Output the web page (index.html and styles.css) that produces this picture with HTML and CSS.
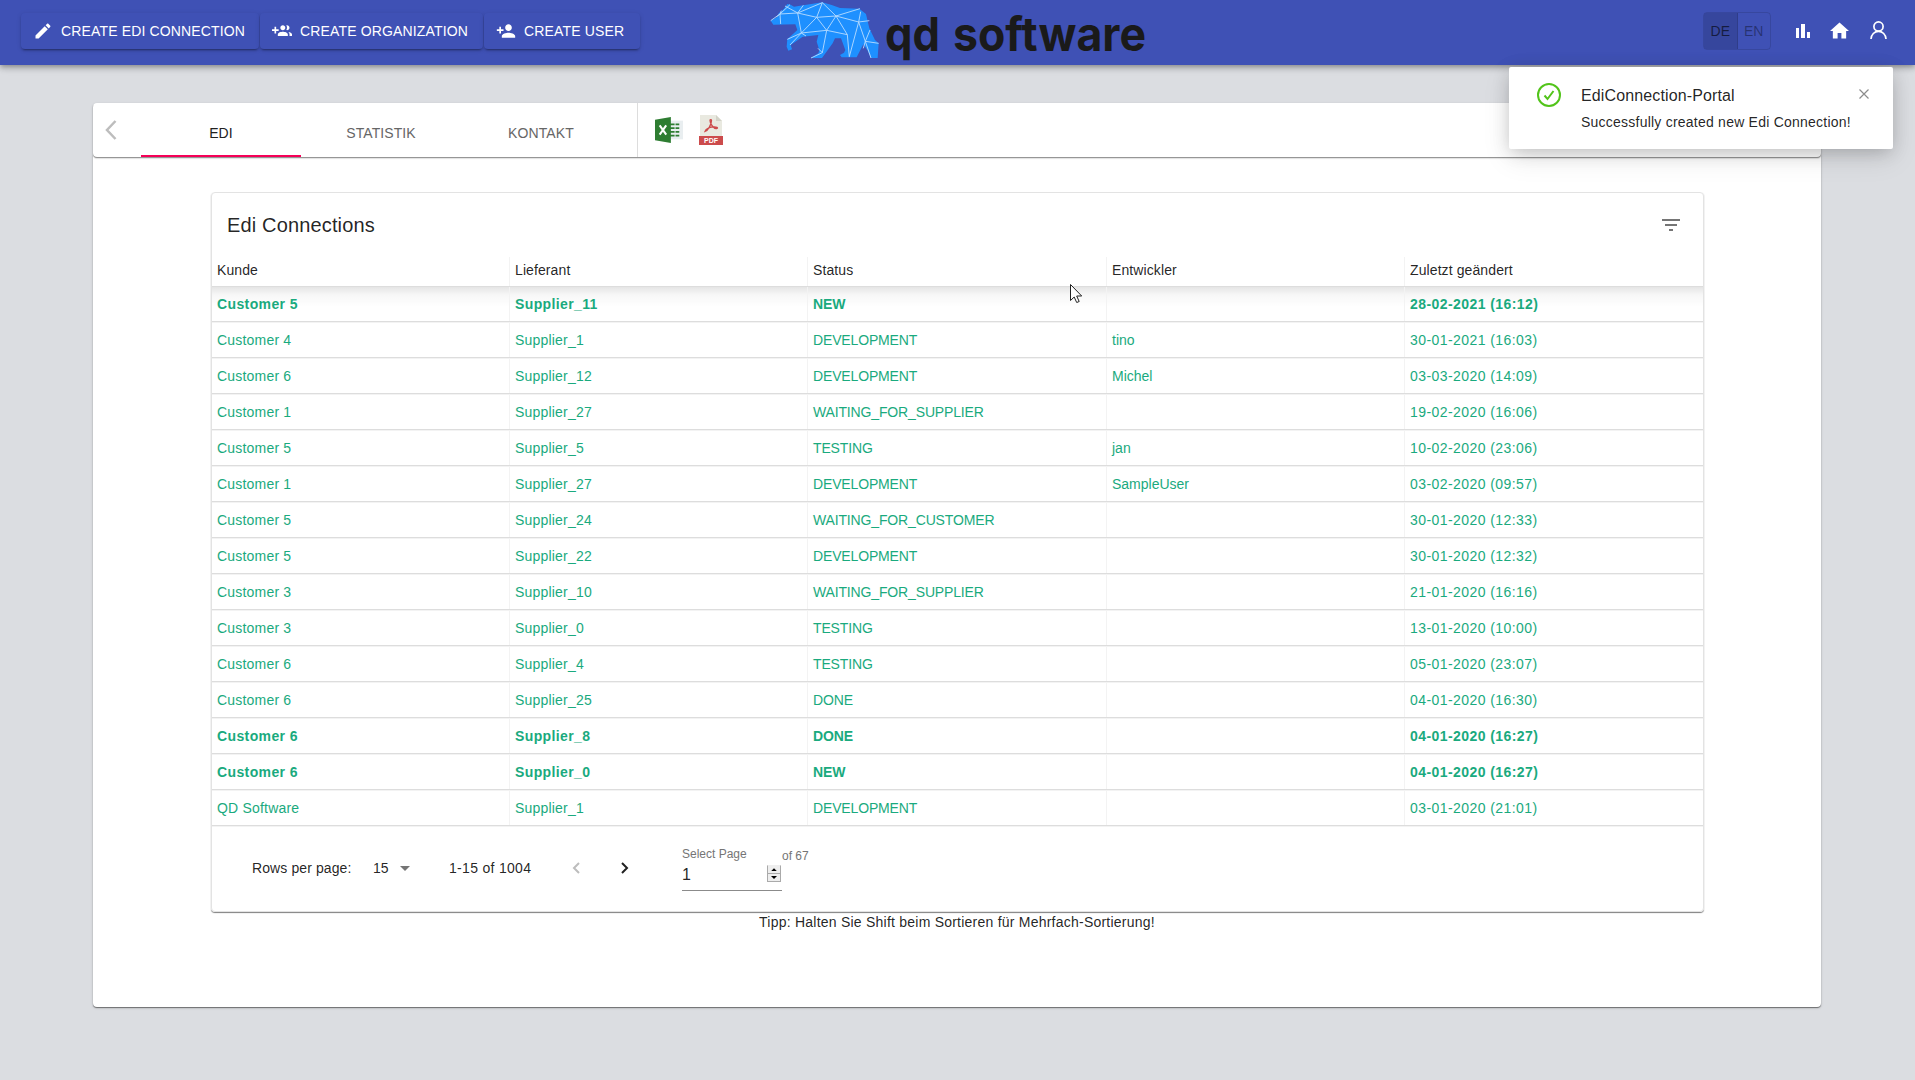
FILE: index.html
```html
<!DOCTYPE html>
<html lang="de">
<head>
<meta charset="utf-8">
<title>EdiConnection-Portal</title>
<link rel="stylesheet" href="styles.css">
</head>
<body>
<header class="appbar">
  <nav class="actions">
    <button class="btn btn-edi"><svg class="ic" viewBox="0 0 24 24"><path d="M3 17.25V21h3.75L17.81 9.94l-3.75-3.75L3 17.25zM20.71 7.04c.39-.39.39-1.02 0-1.41l-2.34-2.34c-.39-.39-1.02-.39-1.41 0l-1.83 1.83 3.75 3.75 1.83-1.83z"/></svg><span>CREATE EDI CONNECTION</span></button>
    <button class="btn btn-org"><svg class="ic" viewBox="0 0 24 24"><path d="M8 10H5V7H3v3H0v2h3v3h2v-3h3v-2zm10 1c1.66 0 2.99-1.34 2.99-3S19.66 5 18 5c-.32 0-.63.05-.91.14.57.81.9 1.79.9 2.86s-.34 2.04-.9 2.86c.28.09.59.14.91.14zm-5 0c1.66 0 2.99-1.34 2.99-3S14.66 5 13 5c-1.66 0-3 1.34-3 3s1.34 3 3 3zm6.62 2.16c.83.73 1.38 1.66 1.38 2.84v2h3v-2c0-1.54-2.37-2.49-4.38-2.84zM13 13c-2 0-6 1-6 3v2h12v-2c0-2-4-3-6-3z"/></svg><span>CREATE ORGANIZATION</span></button>
    <button class="btn btn-user"><svg class="ic" viewBox="0 0 24 24"><path d="M15 12c2.21 0 4-1.79 4-4s-1.79-4-4-4-4 1.79-4 4 1.79 4 4 4zm-9-2V7H4v3H1v2h3v3h2v-3h3v-2H6zm9 4c-2.67 0-8 1.34-8 4v2h16v-2c0-2.66-5.33-4-8-4z"/></svg><span>CREATE USER</span></button>
  </nav>
  <svg class="logo" viewBox="0 0 390 64">
    <g transform="translate(-10 0) scale(.3333)">
      <path class="bear" d="M32 62 53 50 56 40 72 26 82 12 92 14 102 20 130 16 187 7 215 15 240 24 298 26 318 42 328 85 345 120 356 130 353 174H333L322 150 310 133 290 172H245L240 165 252 158 256 150 243 115H225L218 130 186 174H153L175 160 178 150 170 125 175 105 128 110 92 135 96 148 85 152 80 140 82 118 112 90 106 73 40 74Z"/>
      <path class="mesh" d="M32 62 60 42 62 72M50 50 60 42 64 32M60 42 113 39 75 18M130 16 113 39 187 8M60 42 90 14M113 39 170 52 187 8 228 48 170 52 124 99 113 39M170 52 200 91 228 48 300 26M228 48 296 66 302 35M296 66 328 62M296 66 316 124 330 90M228 48 262 104 200 91 124 99 82 118M124 99 138 108M124 99 90 135M200 91 187 158 174 145M187 158 153 174M296 66 268 170M262 104 268 170M316 124 356 130M316 124 310 145M316 124 333 174"/>
    </g>
    <text class="wordmark" y="51"><tspan x="115" textLength="55" lengthAdjust="spacingAndGlyphs">qd</tspan><tspan x="183" textLength="193" lengthAdjust="spacingAndGlyphs">software</tspan></text>
  </svg>
  <div class="tools">
    <div class="lang"><span class="on">DE</span><span>EN</span></div>
    <svg class="ti chart" viewBox="0 0 14 14"><path d="M0 4h3v10H0zM5 0h4v14H5zM11 8h3v6h-3z"/></svg>
    <svg class="ti home" viewBox="2 3 20 17"><path d="M10 20v-6h4v6h5v-8h3L12 3 2 12h3v8z"/></svg>
    <svg class="ti person" viewBox="0 0 17 18"><circle cx="8.500" cy="5.500" r="4.600"/><path d="M1 18c.2-4.500 3.500-7.600 7.500-7.600s7.300 3.100 7.500 7.600"/></svg>
  </div>
</header>

<main class="panel">
  <div class="tabbar">
    <svg class="back" viewBox="0 0 12 20"><path d="M10.500 1 2 10l8.500 9"/></svg>
    <div class="tab active">EDI</div>
    <div class="tab">STATISTIK</div>
    <div class="tab">KONTAKT</div>
    <div class="exports">
      <svg class="xls" viewBox="0 0 30 28"><path fill="#e9eef0" d="M15 4h15v20H15z"/><path fill="#2e7d32" d="M0 3 17 0v28L0 25zM17 7h4v2h-4zm5 0h4v2h-4zm-5 4h4v2h-4zm5 0h4v2h-4zm-5 4h4v2h-4zm5 0h4v2h-4zm-5 4h4v2h-4zm5 0h4v2h-4z"/><path stroke="#fff" stroke-width="2.200" d="m5 9 7 10M12 9 5 19"/></svg>
      <svg class="pdf" viewBox="0 0 24 30"><path fill="#e9e9e0" d="M1 0h16l6 6v15H1z"/><path fill="#d3d3c8" d="m17 0 6 6h-6z"/><path fill="none" stroke="#cc4b4c" stroke-width="1.300" d="M6 16.500c3-1 6.500-7 6.500-11 0-1-1.500-1-1.500 0 0 3.500 4 8.500 6.500 8s0-2-3.500-1.600-7 2-8 4.600z"/><path fill="#cc4b4c" d="M0 21h24v9H0z"/><text x="12" y="28.200">PDF</text></svg>
    </div>
  </div>

  <section class="card">
    <div class="card-head"><h1>Edi Connections</h1><svg class="filter" viewBox="0 0 18 12"><path d="M7 12h4v-2H7v2zM0 0v2h18V0H0zm3 7h12V5H3v2z"/></svg></div>
    <div class="grid head"><span>Kunde</span><span>Lieferant</span><span>Status</span><span>Entwickler</span><span>Zuletzt geändert</span></div>
    <div class="rows">
      <div class="grid row bold"><span>Customer 5</span><span>Supplier_11</span><span>NEW</span><span></span><span>28-02-2021 (16:12)</span></div>
      <div class="grid row"><span>Customer 4</span><span>Supplier_1</span><span>DEVELOPMENT</span><span>tino</span><span>30-01-2021 (16:03)</span></div>
      <div class="grid row"><span>Customer 6</span><span>Supplier_12</span><span>DEVELOPMENT</span><span>Michel</span><span>03-03-2020 (14:09)</span></div>
      <div class="grid row"><span>Customer 1</span><span>Supplier_27</span><span>WAITING_FOR_SUPPLIER</span><span></span><span>19-02-2020 (16:06)</span></div>
      <div class="grid row"><span>Customer 5</span><span>Supplier_5</span><span>TESTING</span><span>jan</span><span>10-02-2020 (23:06)</span></div>
      <div class="grid row"><span>Customer 1</span><span>Supplier_27</span><span>DEVELOPMENT</span><span>SampleUser</span><span>03-02-2020 (09:57)</span></div>
      <div class="grid row"><span>Customer 5</span><span>Supplier_24</span><span>WAITING_FOR_CUSTOMER</span><span></span><span>30-01-2020 (12:33)</span></div>
      <div class="grid row"><span>Customer 5</span><span>Supplier_22</span><span>DEVELOPMENT</span><span></span><span>30-01-2020 (12:32)</span></div>
      <div class="grid row"><span>Customer 3</span><span>Supplier_10</span><span>WAITING_FOR_SUPPLIER</span><span></span><span>21-01-2020 (16:16)</span></div>
      <div class="grid row"><span>Customer 3</span><span>Supplier_0</span><span>TESTING</span><span></span><span>13-01-2020 (10:00)</span></div>
      <div class="grid row"><span>Customer 6</span><span>Supplier_4</span><span>TESTING</span><span></span><span>05-01-2020 (23:07)</span></div>
      <div class="grid row"><span>Customer 6</span><span>Supplier_25</span><span>DONE</span><span></span><span>04-01-2020 (16:30)</span></div>
      <div class="grid row bold"><span>Customer 6</span><span>Supplier_8</span><span>DONE</span><span></span><span>04-01-2020 (16:27)</span></div>
      <div class="grid row bold"><span>Customer 6</span><span>Supplier_0</span><span>NEW</span><span></span><span>04-01-2020 (16:27)</span></div>
      <div class="grid row"><span>QD Software</span><span>Supplier_1</span><span>DEVELOPMENT</span><span></span><span>03-01-2020 (21:01)</span></div>
    </div>
    <div class="pager">
      <span class="rpp">Rows per page:</span>
      <span class="size">15</span><i class="caret"></i>
      <span class="range">1-15 of 1004</span>
      <svg class="chev off" viewBox="0 0 8 12"><path d="M7 1 2 6l5 5"/></svg>
      <svg class="chev next" viewBox="0 0 8 12"><path d="m1 1 5 5-5 5"/></svg>
      <div class="pick"><label>Select Page</label><div class="field"><span>1</span><span class="spin"><i class="up"></i><i class="down"></i></span></div></div>
      <span class="total">of 67</span>
    </div>
  </section>
  <p class="tip">Tipp: Halten Sie Shift beim Sortieren für Mehrfach-Sortierung!</p>
</main>

<aside class="toast">
  <svg class="ok" viewBox="0 0 24 24"><circle cx="12" cy="12" r="11"/><path d="m7.500 12.500 3 3.500 6-8"/></svg>
  <div class="toast-text"><strong>EdiConnection-Portal</strong><span>Successfully created new Edi Connection!</span></div>
  <svg class="close" viewBox="0 0 10 10"><path d="m.5.500 9 9M9.500.500l-9 9"/></svg>
</aside>
<svg class="cursor" viewBox="0 0 12 19"><path d="M.5.500v16l3.700-3.500 2.500 5.500 2.500-1-2.500-5.500h5z"/></svg>
</body>
</html>
```
FILE: styles.css
```css
* { box-sizing: border-box; }
body { margin: 0; height: 1080px; overflow: hidden; background: #dbdde1; color: rgba(0,0,0,.87); font: 14px/20px "Liberation Sans", Arial, sans-serif; }
svg { display: block; flex: none; }
.appbar { position: relative; height: 65px; background: #3f51b5; display: grid; grid-template-columns: 770px 390px 1fr; box-shadow: 0 2px 4px -1px rgba(0,0,0,.2), 0 4px 5px rgba(0,0,0,.14), 0 1px 10px rgba(0,0,0,.12); }
.actions { display: flex; gap: 1px; padding: 13px 0 0 21px; }
.btn { display: flex; align-items: center; gap: 8px; height: 36px; padding: 0 0 0 12px; border: 0; border-radius: 4px; background: #3f51b5; color: #fff; font: inherit; white-space: nowrap; letter-spacing: .15px; box-shadow: 0 3px 1px -2px rgba(0,0,0,.2), 0 2px 2px rgba(0,0,0,.14), 0 1px 5px rgba(0,0,0,.12); }
.btn-edi { width: 238px; }
.btn-org { width: 223px; }
.btn-user { width: 156px; }
.ic { width: 20px; height: 20px; fill: #fff; }
.logo { width: 390px; height: 64px; }
.bear { fill: #1e90ff; }
.mesh { fill: none; stroke: #b9dcff; stroke-width: 2.700; }
.wordmark { font: 700 47px Inter, sans-serif; fill: #1a1a1a; }
.tools { display: flex; justify-content: flex-end; padding-right: 28px; }
.lang { display: flex; width: 68px; height: 38px; margin: 12px 25px 0 0; border: 1px solid rgba(0,0,0,.12); border-radius: 4px; overflow: hidden; color: rgba(0,0,0,.38); line-height: 36px; text-align: center; }
.lang span { flex: 1; }
.lang .on { background: rgba(0,0,0,.13); border-right: 1px solid rgba(0,0,0,.12); color: rgba(0,0,0,.6); }
.ti { fill: #fff; }
.chart { width: 14px; height: 14px; margin: 24px 20px 0 0; }
.home { width: 19px; height: 17px; margin: 22px 21px 0 0; }
.person { width: 17px; height: 18px; margin-top: 21px; fill: none; stroke: #fff; stroke-width: 1.700; }
.panel { width: 1728px; height: 904px; margin: 38px 0 0 93px; background: #fff; border-radius: 4px; box-shadow: 0 1px 1px rgba(0,0,0,.45), 0 1px 3px rgba(0,0,0,.15); }
.tabbar { display: flex; height: 54px; border-radius: 4px; box-shadow: 0 1px 0 #969696, 0 2px 1px rgba(0,0,0,.12); }
.back { width: 12px; height: 20px; margin: 17px 24px 0 12px; fill: none; stroke: #bdbdbd; stroke-width: 2.500; }
.tab { width: 160px; padding-top: 20px; text-align: center; color: #666; letter-spacing: .1px; }
.active { color: #212121; border-bottom: 2px solid #f50057; }
.exports { display: flex; gap: 16px; margin-left: 16px; padding: 13px 0 0 17px; border-left: 1px solid #ddd; }
.xls { width: 28px; height: 28px; fill: none; }
.pdf { width: 24px; height: 30px; margin-top: -1px; }
.pdf text { font: bold 7px "Liberation Sans", sans-serif; fill: #fff; text-anchor: middle; }
.card { width: 1493px; height: 720px; margin: 35px 0 0 118px; border: 1px solid #e3e3e3; border-radius: 4px; box-shadow: 0 1px 1px rgba(0,0,0,.5); }
.card-head { display: flex; justify-content: space-between; height: 64px; padding: 21px 23px 0 15px; }
h1 { margin: 0; font-size: 20px; line-height: 22px; font-weight: 400; letter-spacing: .15px; }
.filter { width: 18px; height: 12px; margin-top: 5px; fill: #757575; }
.grid { display: grid; grid-template-columns: 297px 298px 299px 298px 1fr; }
.grid span { padding-left: 5px; border-left: 1px solid #f3f3f3; }
.grid span:first-child { border-left-color: transparent; padding-left: 4px; }
.head { height: 30px; line-height: 26px; letter-spacing: .1px; border-bottom: 1px solid #ddd; }
.rows { background: linear-gradient(rgba(0,0,0,.1), rgba(0,0,0,.03) 8px, transparent 20px); }
.row { height: 36px; line-height: 37px; color: #1aaa7e; border-bottom: 1px solid #ddd; box-shadow: 0 1px 0 #f3f3f3; }
.row:first-child { height: 35px; line-height: 35px; }
.row span { height: 35px; }
.row:first-child span { height: 34px; }
.row span:nth-child(-n+2) { letter-spacing: .2px; }
.row.bold span:nth-child(-n+2) { letter-spacing: .38px; }
.row span:nth-child(3) { letter-spacing: -.15px; }
.row span:last-child { letter-spacing: .430px; }
.bold { font-weight: 700; }
.pager { display: flex; padding: 32px 0 0 40px; height: 86px; line-height: 20px; }
.rpp { width: 121px; letter-spacing: .1px; }
.size { width: 27px; }
.caret { width: 10px; height: 5px; margin: 8px 39px 0 0; background: #757575; clip-path: polygon(0 0, 100% 0, 50% 100%); }
.range { width: 123px; letter-spacing: .3px; }
.chev { width: 8px; height: 12px; margin: 4px 41px 0 0; fill: none; stroke: #212121; stroke-width: 2; }
.off { stroke: #bdbdbd; }
.next { margin-right: 53px; }
.pick { width: 100px; height: 46px; margin-top: -13px; border-bottom: 1px solid #8b8b8b; }
.pick label { display: block; font-size: 12px; line-height: 18px; color: #757575; }
.field { display: flex; justify-content: space-between; font-size: 16px; padding-top: 2px; }
.spin { display: grid; width: 14px; height: 17px; margin: 0 1px 0 0; border: 1px solid #aaa; border-top-color: #eee; background: linear-gradient(#eee 7px, #aaa 7px, #aaa 8px, #eee 8px); place-items: center; }
.spin i { width: 6px; height: 3px; background: #000; clip-path: polygon(50% 0, 100% 100%, 0 100%); }
.spin .down { transform: rotate(180deg); }
.total { font-size: 12px; line-height: 16px; margin-top: -10px; color: #757575; }
.tip { margin: 0; text-align: center; letter-spacing: .23px; }
.toast { position: absolute; left: 1509px; top: 67px; width: 384px; height: 82px; display: flex; background: #fff; border-radius: 2px; padding: 16px 23px 0 28px; box-shadow: 0 6px 16px -8px rgba(0,0,0,.1), 0 9px 28px rgba(0,0,0,.1), 0 3px 18px rgba(0,0,0,.13); }
.ok { width: 24px; height: 24px; fill: none; stroke: #52c41a; stroke-width: 2; }
.toast-text { display: flex; flex-direction: column; width: 278px; margin-left: 20px; white-space: nowrap; }
.toast strong { font-weight: 400; font-size: 16px; line-height: 24px; margin-bottom: 4px; padding-top: 1px; letter-spacing: .13px; }
.toast-text span { letter-spacing: .23px; }
.close { width: 10px; height: 10px; margin-top: 6px; stroke: #8c8c8c; stroke-width: 1.200; }
.cursor { position: absolute; left: 1070px; top: 284px; width: 12px; height: 19px; fill: #fff; stroke: #222; }
```
